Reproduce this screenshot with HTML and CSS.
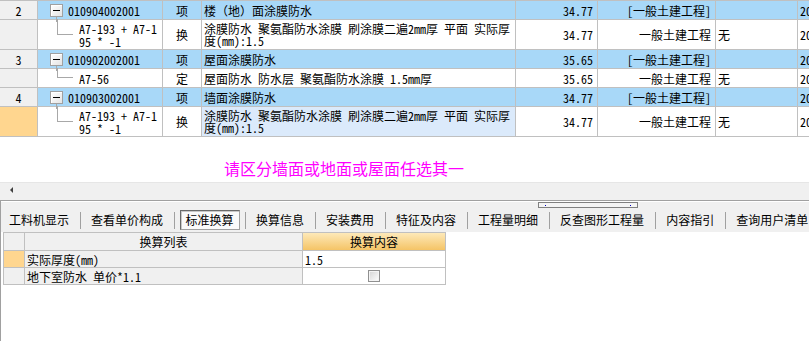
FILE: index.html
```html
<!DOCTYPE html>
<html lang="zh-CN">
<head>
<meta charset="utf-8">
<title>换算</title>
<link rel="stylesheet" href="styles.css">
</head>
<body>
<div class="app">
  <div class="top">
    <div class="grid">
      <div class="row item">
        <div class="c num">2</div>
        <div class="c code"><span class="tbox"></span><span class="ct">010904002001</span></div>
        <div class="c typ">项</div>
        <div class="c name">楼（地）面涂膜防水</div>
        <div class="c amt">34.77</div>
        <div class="c pro">[一般土建工程]</div>
        <div class="c wu"></div>
        <div class="c last">20</div>
      </div>
      <div class="row sub dbl">
        <div class="c num"></div>
        <div class="c code"><span class="tl"></span><span class="ct">A7-193 + A7-1<br>95 * -1</span></div>
        <div class="c typ">换</div>
        <div class="c name"><span class="ml">涂膜防水 聚氨酯防水涂膜 刷涂膜二遍2mm厚 平面 实际厚<br>度(mm):1.5</span></div>
        <div class="c amt">34.77</div>
        <div class="c pro">一般土建工程</div>
        <div class="c wu">无</div>
        <div class="c last">20</div>
      </div>
      <div class="row item">
        <div class="c num">3</div>
        <div class="c code"><span class="tbox"></span><span class="ct">010902002001</span></div>
        <div class="c typ">项</div>
        <div class="c name">屋面涂膜防水</div>
        <div class="c amt">35.65</div>
        <div class="c pro">[一般土建工程]</div>
        <div class="c wu"></div>
        <div class="c last">20</div>
      </div>
      <div class="row sub">
        <div class="c num"></div>
        <div class="c code"><span class="tl"></span><span class="ct">A7-56</span></div>
        <div class="c typ">定</div>
        <div class="c name">屋面防水 防水层 聚氨酯防水涂膜 1.5mm厚</div>
        <div class="c amt">35.65</div>
        <div class="c pro">一般土建工程</div>
        <div class="c wu">无</div>
        <div class="c last">20</div>
      </div>
      <div class="row item">
        <div class="c num">4</div>
        <div class="c code"><span class="tbox"></span><span class="ct">010903002001</span></div>
        <div class="c typ">项</div>
        <div class="c name">墙面涂膜防水</div>
        <div class="c amt">34.77</div>
        <div class="c pro">[一般土建工程]</div>
        <div class="c wu"></div>
        <div class="c last">20</div>
      </div>
      <div class="row sub dbl">
        <div class="c num cur"></div>
        <div class="c code"><span class="tl"></span><span class="ct">A7-193 + A7-1<br>95 * -1</span></div>
        <div class="c typ">换</div>
        <div class="c name sel"><span class="ml">涂膜防水 聚氨酯防水涂膜 刷涂膜二遍2mm厚 平面 实际厚<br>度(mm):1.5</span></div>
        <div class="c amt">34.77</div>
        <div class="c pro">一般土建工程</div>
        <div class="c wu">无</div>
        <div class="c last">20</div>
      </div>
    </div>
    <div class="blank">
      <div class="note">请区分墙面或地面或屋面任选其一</div>
    </div>
    <div class="hscroll">
      <span class="arrow"></span>
    </div>
  </div>
  <div class="split"></div>
  <div class="bottom">
    <div class="strip">
      <div class="grip"><span class="dot"></span><span class="dot"></span></div>
      <div class="tabs">
        <span class="tab">工料机显示</span><span class="sep"></span>
        <span class="tab">查看单价构成</span><span class="sep"></span>
        <span class="tab active"><span class="tabin">标准换算</span></span><span class="sep"></span>
        <span class="tab">换算信息</span><span class="sep"></span>
        <span class="tab">安装费用</span><span class="sep"></span>
        <span class="tab">特征及内容</span><span class="sep"></span>
        <span class="tab">工程量明细</span><span class="sep"></span>
        <span class="tab">反查图形工程量</span><span class="sep"></span>
        <span class="tab">内容指引</span><span class="sep"></span>
        <span class="tab">查询用户清单</span>
      </div>
    </div>
    <div class="btable">
      <div class="brow head">
        <div class="b b0"></div>
        <div class="b b1 center">换算列表</div>
        <div class="b b2 center hl">换算内容</div>
      </div>
      <div class="brow">
        <div class="b b0 cur"></div>
        <div class="b b1">实际厚度(mm)</div>
        <div class="b b2 val">1.5</div>
      </div>
      <div class="brow">
        <div class="b b0"></div>
        <div class="b b1">地下室防水 单价*1.1</div>
        <div class="b b2 center"><span class="ck"></span></div>
      </div>
    </div>
  </div>
</div>
</body>
</html>
```

FILE: styles.css
```css
* { box-sizing: border-box; }
html, body { margin: 0; padding: 0; }
body {
  width: 809px;
  height: 341px;
  overflow: hidden;
  background: #fff;
  color: #000;
  font-family: "Noto Sans Mono CJK SC", "Noto Sans CJK SC", monospace;
  font-size: 12px;
}
.app { display: flex; flex-direction: column; height: 341px; }

/* ---------- top grid ---------- */
.top { display: flex; flex-direction: column; height: 197px; }
.grid { border-top: 1px solid #c0c0c0; }
.row {
  display: flex;
  height: 19px;
  border-bottom: 1px solid #c0c0c0;
}
.row.dbl { height: 30px; }
.row.item { background: #a8d8f8; }
.c {
  display: flex;
  align-items: center;
  border-right: 1px solid #c0c0c0;
  white-space: nowrap;
  overflow: hidden;
  flex-shrink: 0;
  line-height: 13px;
}
.num { width: 38px; justify-content: center; background: #f0f0f0; }
.num.cur { background: #ffd68f; }
.code { width: 125px; padding-left: 12px; overflow: visible; position: relative; }
.sub .code { padding-left: 19px; align-items: center; }
.typ { width: 39px; justify-content: center; }
.name { width: 314px; padding-left: 2px; }
.name.sel { background: #dbeafb; }
.amt { width: 82px; justify-content: flex-end; padding-right: 4px; }
.pro { width: 118px; justify-content: flex-end; padding-right: 4px; }
.wu { width: 82px; padding-left: 2px; }
.last { flex: 1; padding-left: 2px; border-right: 0; }
.ml { white-space: nowrap; line-height: 12px; }

.tbox {
  position: relative;
  width: 13px;
  height: 13px;
  flex-shrink: 0;
  margin-right: 5px;
  border: 1px solid #a0a0a0;
  background: linear-gradient(135deg, #ffffff 0%, #e4e4e4 100%);
  box-shadow: inset 1px 1px 0 #fff;
}
.tbox::before {
  content: "";
  position: absolute;
  left: 2px;
  top: 5px;
  width: 7px;
  height: 1px;
  background: #000;
}
.tbox::after {
  content: "";
  position: absolute;
  left: 5px;
  top: 12px;
  width: 1px;
  height: 5px;
  background: #a8a8a8;
}
.tl {
  align-self: flex-start;
  flex-shrink: 0;
  width: 15px;
  height: 50%;
  border-left: 1px solid #a8a8a8;
  border-bottom: 1px solid #a8a8a8;
  box-sizing: content-box;
  margin-top: -1px;
}
.ct { margin-left: 0; white-space: nowrap; }
.sub .ct { margin-left: 6px; }

.blank { height: 45px; }
.note {
  margin-left: 224px;
  padding-top: 22px;
  font-size: 16px;
  line-height: 18px;
  color: #ff00ff;
}
.hscroll {
  height: 15px;
  background: #f0f0f0;
  border-top: 1px solid #e6e6e6;
  display: flex;
  align-items: center;
  padding-left: 10px;
}
.arrow {
  width: 0;
  height: 0;
  border-top: 3px solid transparent;
  border-bottom: 3px solid transparent;
  border-right: 3px solid #404040;
}

/* ---------- splitter ---------- */
.split {
  height: 4px;
  background: #f0f0f0;
  border-bottom: 1px solid #a0a0a0;
}

/* ---------- bottom panel ---------- */
.bottom {
  flex: 1;
  border-left: 1px solid #a0a0a0;
  background: #fff;
}
.strip { background: #f0f0f0; }
.grip {
  margin-left: 537px;
  width: 100px;
  height: 6px;
  margin-top: 1px;
  border: 1px solid #808080;
  background: #f4f4f4;
  display: flex;
  justify-content: space-between;
  align-items: center;
  padding: 0 6px;
}
.dot { width: 1px; height: 1px; background: #0000c0; }
.tabs {
  display: flex;
  align-items: center;
  height: 24px;
  padding-left: 0;
  font-family: "Noto Sans CJK SC", sans-serif;
  font-size: 12px;
  line-height: 16px;
}
.tab { padding: 0 10.5px; white-space: nowrap; }
.tab:first-child { padding-left: 8px; }
.tab.active { padding: 0 5px; }
.tabin {
  display: block;
  padding: 1px 5px 1px;
  border: 1px solid #a0a0a0;
  border-top-color: #6a6a6a;
  border-left-color: #6a6a6a;
  box-shadow: inset 1px 1px 0 #c8c8c8;
  background: #fafafa;
}
.sep { width: 1px; height: 17px; background: #a0a0a0; flex-shrink: 0; }

.btable {
  margin-left: 2px;
  width: 443px;
  border-top: 1px solid #c0c0c0;
  border-left: 1px solid #c0c0c0;
}
.brow { display: flex; height: 17px; border-bottom: 1px solid #c0c0c0; }
.brow.head { height: 18px; }
.b {
  display: flex;
  align-items: center;
  border-right: 1px solid #c0c0c0;
  white-space: nowrap;
  flex-shrink: 0;
}
.b0 { width: 21px; background: #f0f0f0; }
.b0.cur { background: #ffd68f; }
.b1 { width: 278px; background: #f0f0f0; padding-left: 2px; }
.b2 { width: 143px; background: #fff; }
.center { justify-content: center; padding-left: 0; }
.hl { background: linear-gradient(#fde9b9, #f5c466); }
.val { padding-left: 2px; }
.ck {
  width: 12px;
  height: 12px;
  border: 1px solid #909090;
  background: linear-gradient(135deg, #d4d4d4 0%, #ffffff 100%);
  box-shadow: inset 0 0 0 1px #f4f4f4;
}
```
